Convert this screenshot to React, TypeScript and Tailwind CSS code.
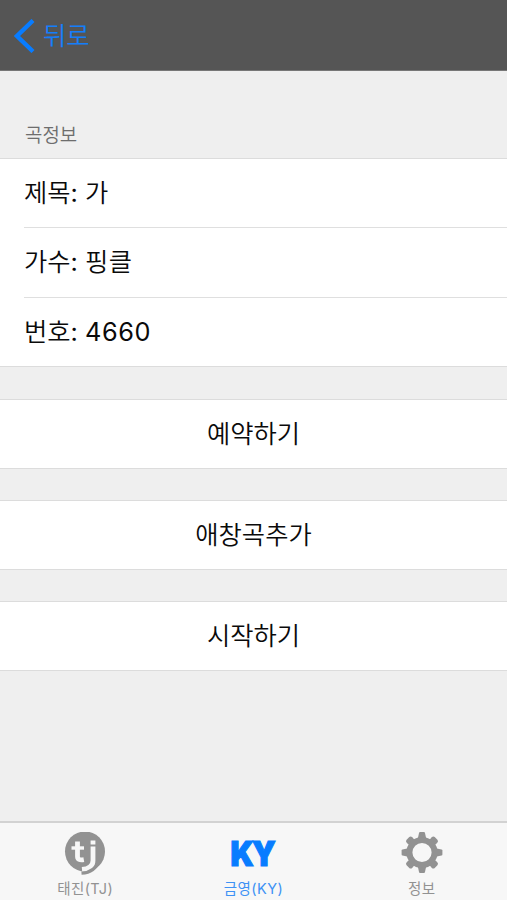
import type { ReactNode } from "react";

const song = [
  { label: "제목", value: "가", weight: "font-[350]", height: "h-[69px]" },
  { label: "가수", value: "핑클", weight: "font-[350]", height: "h-[70px]" },
  { label: "번호", value: "4660", weight: "font-normal", height: "h-[68px]" },
];

const actions = ["예약하기", "애창곡추가", "시작하기"];

function TjIcon() {
  return (
    <svg width="42" height="44" viewBox="0 0 42 44">
      <circle cx="21" cy="19.5" r="20" fill="#929292" />
      <g fill="none" stroke="#f7f7f7">
        <path d="M13.5 9.5v15q0 4.3 6.3 3.2" strokeWidth="4.8" />
        <path d="M7.5 16h12.5" strokeWidth="3.4" />
        <path d="M29 14.5v14q0 8-11 9" strokeWidth="4.8" />
      </g>
      <path d="M26.6 8.5h4.8v3.9h-4.8z" fill="#f7f7f7" />
      <path d="M35 28.5q-4 12-17.5 12.7" fill="none" stroke="#929292" strokeWidth="3.2" />
    </svg>
  );
}

function KyIcon() {
  return (
    <svg width="50" height="44" viewBox="0 0 50 44" className="overflow-visible">
      <text
        x="2.5"
        y="33.5"
        textLength="43.5"
        lengthAdjust="spacingAndGlyphs"
        fill="#087cff"
        stroke="#087cff"
        strokeWidth="1.2"
        className="font-['Inter'] text-[34.5px] font-black leading-[40px] tracking-[-2px]"
      >
        KY
      </text>
    </svg>
  );
}

function GearIcon() {
  return (
    <svg width="42" height="44" viewBox="0 0 42 44">
      <g fill="#929292">
        {[0, 90, 180, 270].map((a) => (
          <path key={a} d="M16.5 8l1.5-7q.2-.9 1-.9h4q.8 0 1 .9l1.5 7z" transform={`rotate(${a} 21 20.5)`} />
        ))}
        {[45, 135, 225, 315].map((a) => (
          <path key={a} d="M17.500 8l-.4-5q0-2.400 2-2.400h3.800q2 0 2 2.400l-.4 5z" transform={`rotate(${a} 21 20.5)`} />
        ))}
      </g>
      <circle cx="21" cy="20.5" r="12.6" fill="none" stroke="#929292" strokeWidth="6" />
    </svg>
  );
}

function Tab({ icon, label, active }: { icon: ReactNode; label: string; active?: boolean }) {
  return (
    <button className={`flex flex-1 flex-col items-center pt-[9px] text-[14.5px] ${active ? "text-[#3e92f5]" : "text-[#929292]"}`}>
      {icon}
      <span className="mt-[2px] leading-[22px] tracking-[0.4px]">{label}</span>
    </button>
  );
}

export default function App() {
  return (
    <div className="flex h-[900px] w-full flex-col overflow-hidden bg-[#efefef] font-['Inter','Noto_Sans_CJK_KR',sans-serif] text-[#0a0a0a]">
      <header className="flex h-[71px] shrink-0 items-center border-b border-[#777] bg-[#555] pl-[14px] pt-[2px] text-[#147efb]">
        <button className="flex items-center gap-[8px]">
          <svg width="21" height="34" viewBox="0 0 21 34" fill="none" stroke="#087cff" strokeWidth="4.4">
            <path d="M19 1.5L3 17l16 15.5" />
          </svg>
          <span className="text-[25.4px] font-[350] leading-[34px]">뒤로</span>
        </button>
      </header>

      <main className="flex-1">
        <h2 className="h-[87px] pl-[25px] pt-[51px] text-[18.9px] font-[350] leading-[28px] text-[#6d6d6d]">곡정보</h2>

        <ul className="border-y border-[#dcdcdc] bg-white pl-[24px] text-[25.3px]">
          {song.map((s) => (
            <li key={s.label} className={`border-b border-[#dfdfdf] pt-[15px] leading-[38px] last:border-b-0 ${s.height}`}>
              <span className="font-[350]">{s.label}</span>: <span className={`tracking-[0.6px] ${s.weight}`}>{s.value}</span>
            </li>
          ))}
        </ul>

        <div className="mt-[32px] flex flex-col gap-[31px]">
          {actions.map((a) => (
            <button key={a} className="h-[70px] border-y border-[#dcdcdc] bg-white text-[25.3px] font-[350] leading-[38px]">
              {a}
            </button>
          ))}
        </div>
      </main>

      <nav className="flex h-[79px] shrink-0 border-t-2 border-[#d2d2d2] bg-[#f7f7f7] pl-[1px] pr-[1px]">
        <Tab icon={<TjIcon />} label="태진(TJ)" />
        <Tab icon={<KyIcon />} label="금영(KY)" active />
        <Tab icon={<GearIcon />} label="정보" />
      </nav>
    </div>
  );
}
